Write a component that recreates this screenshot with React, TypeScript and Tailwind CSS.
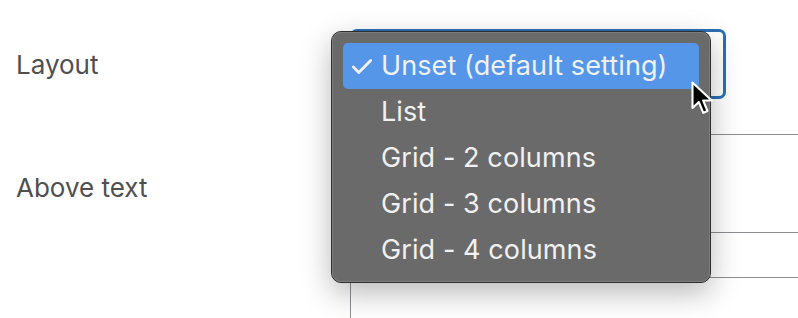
import { Check } from 'lucide-react'

const options = [
  'Unset (default setting)',
  'List',
  'Grid - 2 columns',
  'Grid - 3 columns',
  'Grid - 4 columns',
]

const font = { fontFamily: 'Inter, "Liberation Sans", sans-serif' }

function Cursor() {
  return (
    <svg
      className="absolute left-[691px] top-[81px] h-[36px] w-[24px]"
      viewBox="0 0 16 24"
      aria-hidden="true"
    >
      <path
        d="M1 1 L1 18 L5.2 14 L8.2 21.2 L11 20 L8.1 13 L13.8 13 Z"
        fill="#000"
        stroke="#fff"
        strokeWidth="1.4"
        strokeLinejoin="round"
      />
    </svg>
  )
}

function Menu() {
  return (
    <div className="absolute left-[331px] top-[31px] w-[380px] h-[252px] rounded-[10px] border border-[#2e2e2e] bg-[#6a6a6a] shadow-[0_10px_30px_rgba(0,0,0,0.28)]">
      <div className="h-full rounded-[9px] border border-[#7e7e7e] px-[10px] pt-[10px]">
        {options.map((opt, i) => (
          <div
            key={opt}
            className={`flex h-[46px] items-center rounded-[5px] pl-[6px] text-[27px] leading-none tracking-[0.1px] text-[#f1f1f1] ${i === 0 ? 'bg-[#5596e8]' : ''}`}
          >
            <span className="flex w-[32px] items-center pt-[2px]">
              {i === 0 && <Check className="h-[26px] w-[26px]" strokeWidth={2.6} />}
            </span>
            <span className="pb-[2px]">{opt}</span>
          </div>
        ))}
      </div>
    </div>
  )
}

export default function App() {
  return (
    <div className="relative h-[318px] w-[798px] overflow-hidden bg-white" style={font}>
      <div className="flex">
        <div className="w-[350px] shrink-0 pl-[16px] text-[26px] text-[#4f4f4f]">
          <div className="flex h-[128px] items-center">Layout</div>
          <div className="pt-[40px]">Above text</div>
        </div>
        <div className="flex-1 pt-[29px]">
          <div className="mr-[72px] h-[70px] rounded-[7px] border-[3px] border-[#2a6fb7]" />
          <div className="mt-[35px] border-l border-t border-[#8d8d92]">
            <div className="h-[98px] border-b border-[#8d8d92]" />
            <div className="h-[45px] border-b border-[#8d8d92]" />
            <div className="h-[60px]" />
          </div>
        </div>
      </div>
      <Menu />
      <Cursor />
    </div>
  )
}
